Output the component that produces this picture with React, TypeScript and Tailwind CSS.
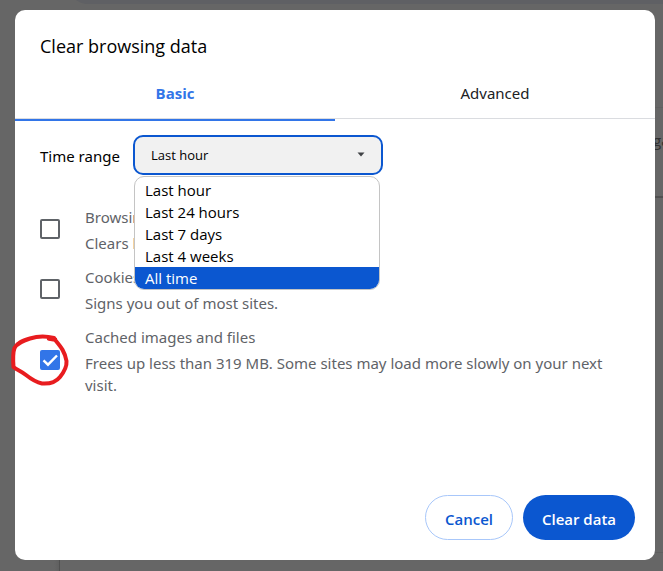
import { useState } from "react";

const ranges = ["Last hour", "Last 24 hours", "Last 7 days", "Last 4 weeks", "All time"];

const items = [
  { id: "history", title: "Browsing history", detail: "Clears history, including in the search box", checked: false },
  { id: "cookies", title: "Cookies and other site data", detail: "Signs you out of most sites.", checked: false },
  {
    id: "cache",
    title: "Cached images and files",
    detail: "Frees up less than 319 MB. Some sites may load more slowly on your next visit.",
    checked: true,
  },
];

function Backdrop() {
  return (
    <div aria-hidden="true" className="absolute inset-0 overflow-hidden bg-[#666666]">
      <div className="absolute -top-7 right-0 left-[68px] h-8 rounded-bl-[20px] bg-[#5f6064]" />
      <div className="absolute top-[107px] -right-2 flex h-[91px] w-[20px] items-start justify-start rounded border border-[#606060] border-b-2 border-b-[#505050] pt-[21px] pl-[1px] text-[15px] text-[#303030]">
        ga
      </div>
      <div className="absolute top-[552px] right-0 h-px w-2 bg-[#5e5e5e]" />
      <div className="absolute bottom-0 left-[54px] h-[11px] w-[6px] border-r border-[#505050] bg-linear-to-r from-[#666666] to-[#606060]" />
    </div>
  );
}

function RedMark() {
  return (
    <svg
      aria-hidden="true"
      className="pointer-events-none absolute -top-[18px] -left-[30px] h-[56px] w-[62px]"
      viewBox="0 0 62 56"
      fill="none"
      stroke="#e81c1f"
      strokeWidth="4"
      strokeLinecap="round"
      strokeLinejoin="round"
    >
      <path d="M44 6C38 4.500 28 4 20 6.500C12 9 7 11 4.500 16C3 20 3 28 3.500 35C7 38 11 39 16 43C21 47 25 50 32 51.500C39 52 46 50 50 45C54 40 57 35 56.500 29C55 20 51 15 46 9" />
      <path d="M39 6.500L45 7.500" strokeWidth="4.500" />
    </svg>
  );
}

function Item({ id, title, detail, checked }: (typeof items)[number]) {
  const [on, setOn] = useState(checked);
  return (
    <div className="flex items-center gap-[25px]">
      <span className="relative size-5 shrink-0">
        <input
          id={id}
          type="checkbox"
          checked={on}
          onChange={() => setOn(!on)}
          className="block size-5 appearance-none rounded-[2px] border-2 border-[#5f6368] checked:border-[#3275e8] checked:bg-[#3275e8]"
        />
        {on && (
          <svg className="pointer-events-none absolute inset-0 size-5" viewBox="0 0 20 20" fill="none" stroke="#ffffff" strokeWidth="2.4">
            <path d="M3.500 10.300L8 14.700L17 5.500" />
          </svg>
        )}
        {checked && <RedMark />}
      </span>
      <label htmlFor={id} className="flex flex-col gap-1 pt-[2px] font-['Noto_Sans',sans-serif] leading-[22px] text-[#5f6368]">
        <span>{title}</span>
        <span>{detail}</span>
      </label>
    </div>
  );
}

export default function App() {
  return (
    <div className="relative flex min-h-screen pt-[10px] pr-2 pb-[11px] pl-[15px] font-['Open_Sans','Noto_Sans',sans-serif] text-[15px] text-[#202124]">
      <Backdrop />
      <main role="dialog" aria-labelledby="heading" className="relative flex flex-1 flex-col rounded-[10px] bg-white">
        <h1 id="heading" className="px-[25px] pt-6 text-lg leading-6 text-black">
          Clear browsing data
        </h1>
        <div role="tablist" className="mt-[10px] flex h-[51px] border-b border-[#dadce0]">
          <button role="tab" aria-selected="true" className="relative flex-1 font-bold text-[#3275e8] after:absolute after:inset-x-0 after:-bottom-[3px] after:h-[2px] after:bg-[#3275e8]">
            Basic
          </button>
          <button role="tab" aria-selected="false" className="flex-1 font-['Noto_Sans',sans-serif]">
            Advanced
          </button>
        </div>
        <div className="flex items-center gap-3 px-[25px] pt-4">
          <label htmlFor="range" className="w-[81px] pt-[2px] font-['Noto_Sans',sans-serif] whitespace-nowrap text-black">
            Time range
          </label>
          <div className="relative">
            <select
              id="range"
              defaultValue="Last hour"
              className="block h-10 w-[250px] appearance-none rounded-[10px] border-2 border-[#0b57d0] bg-[#f1f1f1] px-4 pt-[2px] text-[13px] text-black outline-none"
            >
              {ranges.map((r) => (
                <option key={r}>{r}</option>
              ))}
            </select>
            <svg aria-hidden="true" className="pointer-events-none absolute top-[17px] right-[18px] h-[5px] w-[8px]" viewBox="0 0 8 5">
              <path d="M0.500 0.500H7.500L4 4.500Z" fill="#404346" />
            </svg>
            <ul
              role="listbox"
              className="absolute top-[41px] left-px z-10 flex h-[114px] w-[246px] flex-col overflow-hidden rounded-[10px] border border-[#c4c4c4] bg-white pt-px text-black"
            >
              {ranges.map((r) => (
                <li
                  key={r}
                  role="option"
                  aria-selected={r === "All time"}
                  className="flex flex-1 items-center px-[10px] pt-px leading-5 aria-selected:bg-[#0b57d0] aria-selected:text-white"
                >
                  {r}
                </li>
              ))}
            </ul>
          </div>
        </div>
        <div className="mt-[29px] flex flex-col gap-[10px] px-[25px]">
          {items.map((item) => (
            <Item key={item.id} {...item} />
          ))}
        </div>
        <div className="mt-auto flex justify-end gap-[10px] p-5 font-semibold">
          <button className="h-[45px] w-[88px] rounded-full border border-[#a8c7fa] pt-1 text-[#0b57d0]">Cancel</button>
          <button className="h-[45px] w-[112px] rounded-full bg-[#0b57d0] pt-1 text-white">Clear data</button>
        </div>
      </main>
    </div>
  );
}
